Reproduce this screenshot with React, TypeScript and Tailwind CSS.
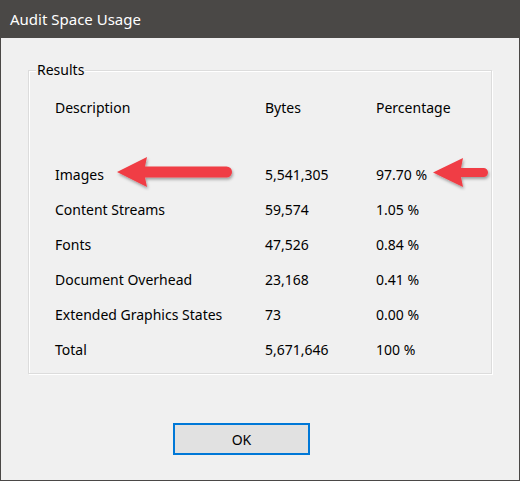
import React from 'react';

const rows = [
  { name: 'Images', bytes: '5,541,305', pct: '97.70 %' },
  { name: 'Content Streams', bytes: '59,574', pct: '1.05 %' },
  { name: 'Fonts', bytes: '47,526', pct: '0.84 %' },
  { name: 'Document Overhead', bytes: '23,168', pct: '0.41 %' },
  { name: 'Extended Graphics States', bytes: '73', pct: '0.00 %' },
  { name: 'Total', bytes: '5,671,646', pct: '100 %' },
];

function Arrow({ className, tipX, backX, endX, cy, headH, shaft }: {
  className: string; tipX: number; backX: number; endX: number; cy: number; headH: number; shaft: number;
}) {
  const w = endX - tipX + 8;
  const h = headH + 8;
  const c = h / 2;
  const bx = backX - tipX + 2;
  const ex = endX - tipX;
  return (
    <svg className={className} width={w} height={h} viewBox={`0 0 ${w} ${h}`} style={{ left: tipX - 2, top: cy - c }}>
      <defs>
        <filter id={`sh${tipX}`} x="-10%" y="-30%" width="130%" height="170%">
          <feDropShadow dx="1" dy="2" stdDeviation="1.5" floodColor="#000" floodOpacity="0.35" />
        </filter>
      </defs>
      <g filter={`url(#sh${tipX})`} fill="#f03c44">
        <path d={`M2 ${c} L${bx + 2} ${c - headH / 2} L${bx} ${c - shaft / 2} L${ex - shaft / 2} ${c - shaft / 2} A${shaft / 2} ${shaft / 2} 0 0 1 ${ex - shaft / 2} ${c + shaft / 2} L${bx} ${c + shaft / 2} L${bx + 2} ${c + headH / 2} Z`} />
      </g>
    </svg>
  );
}

export default function App() {
  return (
    <div className="relative w-[520px] h-[481px] flex flex-col bg-[#4a4846] px-px pb-px text-black" style={{ fontFamily: '"Noto Sans", "Open Sans", sans-serif' }}>
      <div className="h-[38px] flex items-center pl-[9px] text-[15px] text-white">Audit Space Usage</div>
      <div className="flex-1 bg-[#f0f0f0] flex flex-col">
        <div className="relative mt-[32px] ml-[27px] w-[464px] h-[304px] border border-[#dcdcdc] shadow-[inset_1px_1px_0_#fff,1px_1px_0_#fff]">
          <span className="absolute -top-[11px] left-[7px] bg-[#f0f0f0] px-px text-[14px] leading-[20px]">Results</span>
          <div className="grid grid-cols-[210px_111px_1fr] pl-[26px] pt-[19px] text-[14px]">
            <div className="h-[35px] flex items-center">Description</div>
            <div className="h-[35px] flex items-center">Bytes</div>
            <div className="h-[35px] flex items-center">Percentage</div>
            <div className="col-span-3 h-[32px]" />
            {rows.map(r => (
              <React.Fragment key={r.name}>
                <div className="h-[35px] flex items-center">{r.name}</div>
                <div className="h-[35px] flex items-center">{r.bytes}</div>
                <div className="h-[35px] flex items-center">{r.pct}</div>
              </React.Fragment>
            ))}
          </div>
        </div>
        <button className="mt-[49px] ml-[172px] w-[137px] h-[32px] border-2 border-[#0078d7] bg-[#e1e1e1] text-[14px] flex items-center justify-center">OK</button>
      </div>
      <Arrow className="absolute" tipX={117} backX={145} endX={234} cy={172} headH={30} shaft={11} />
      <Arrow className="absolute" tipX={433} backX={461} endX={490} cy={172} headH={29} shaft={9} />
    </div>
  );
}
